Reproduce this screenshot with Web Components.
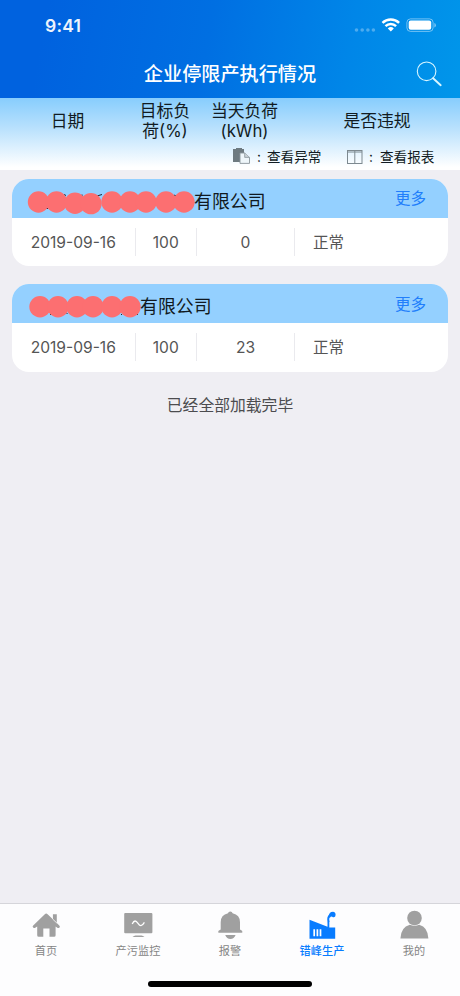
<!DOCTYPE html>
<html lang="zh-CN">
<head>
<meta charset="utf-8">
<title>企业停限产执行情况</title>
<style>
body{margin:0;background:#efeef3;font-family:Inter,"Noto Sans CJK SC",sans-serif}
</style>
</head>
<body>
<app-screen></app-screen>
<script>
const define = (name, html, after) => customElements.define(name, class extends HTMLElement {
  connectedCallback() {
    if (this.shadowRoot) return;
    const root = this.attachShadow({mode: 'open'});
    root.innerHTML = '<style>*{box-sizing:border-box}svg{display:block;overflow:visible}</style>' + html;
    if (after) after(this, root);
  }
});

define('status-bar', `
<style>
:host{display:flex;height:50px;padding:0 24px 0 45px;justify-content:space-between;align-items:flex-start;color:#fff}
.time{font-size:17.5px;line-height:20px;font-weight:600;margin-top:16px;letter-spacing:.2px;opacity:.93}
svg{margin-top:16px}
</style>
<span class="time">9:41</span>
<svg width="82" height="20" viewBox="354 16 82 20">
  <g fill="#fff" opacity=".3"><circle cx="356.5" cy="30" r="1.8"/><circle cx="362.2" cy="30" r="1.8"/><circle cx="367.9" cy="30" r="1.8"/><circle cx="373.4" cy="30" r="1.8"/></g>
  <g fill="none" stroke="#fff" stroke-width="2.5"><path d="M382.5 22.9a12 12 0 0 1 16.6 0"/><path d="M385.5 26.1a7.6 7.6 0 0 1 10.6 0"/></g>
  <path d="M387.8 28.4a4.3 4.3 0 0 1 6 0L390.8 31.6z" fill="#fff"/>
  <rect x="406.9" y="18.9" width="26.2" height="12.5" rx="3.6" fill="none" stroke="#fff" stroke-opacity=".45"/>
  <rect x="408.7" y="20.6" width="22.5" height="9.2" rx="2" fill="#fff"/>
  <path d="M434.4 23q1.5.5 1.5 2.2t-1.5 2.2z" fill="#fff" opacity=".5"/>
</svg>`);

define('nav-bar', `
<style>
:host{display:grid;grid-template-columns:60px 1fr 60px;height:48px;align-items:center;color:#fff}
h1{grid-column:2;margin:0;text-align:center;font-size:19.15px;line-height:26px;font-weight:500;white-space:nowrap}
svg{margin-left:16px}
</style>
<h1><slot></slot></h1>
<svg width="26" height="26" viewBox="416 61 26 26" fill="none" stroke="#d9f6ff"><circle cx="426.6" cy="71.3" r="9.3" stroke-width="1.1"/><path d="M433.1 78.2l7.6 7" stroke-width="1.9" stroke-linecap="round"/></svg>`);

define('column-head', `
<style>
:host{display:block;height:72px;background:linear-gradient(#87cdfd,#b9e1fd 42%,#fff 96%);color:#111b22}
.cols{display:grid;grid-template-columns:135px 60px 99px 166px;height:46px;padding-top:1px;align-items:center;text-align:center;font-size:16.8px;line-height:19.6px}
.legend{display:flex;height:25px;align-items:center;padding-left:233px;font-size:13.6px;line-height:20px}
.legend span{width:68px;white-space:nowrap}
.legend i{width:16px;font-style:normal;text-align:center}
.legend .wide{width:80px}
.legend i+span:last-child{margin-left:1px}
</style>
<div class="cols"><span>日期</span><span>目标负<br>荷(%)</span><span>当天负荷<br>(kWh)</span><span>是否违规</span></div>
<div class="legend">
  <svg width="18" height="17" viewBox="0 0 18 17"><path d="M0 1h3V0h6v1h2v4H7v9H0z" fill="#6e7a80"/><path d="M7 5h4.7l4.8 4.4v6H7z" fill="#eef6fa" stroke="#89949a" stroke-width=".9"/><path d="M11.7 5v4.4h4.8" fill="#cbd3d7" stroke="#89949a" stroke-width=".8"/></svg>
  <i>:</i><span class="wide">查看异常</span>
  <svg width="16" height="14" viewBox="0 0 16 14" fill="none" stroke="#7d8990"><rect x=".5" y=".5" width="14.5" height="13"/><path d="M.5 2h14.5M7.8 1v12.5"/></svg>
  <i>:</i><span>查看报表</span>
</div>`);

define('record-card', `
<style>
:host{display:block;height:87.6px;border-radius:17px;background:#fff;overflow:hidden;font-size:15.6px;color:#555}
header{display:flex;justify-content:space-between;height:39px;background:#94d0ff;padding:0 22px 0 16px}
.name{display:flex;color:#101820;font-size:17.9px;line-height:28px;padding-top:9px}
.more{color:#217efb;font-size:15.5px;line-height:24px;padding-top:8.6px}
.row{display:grid;grid-template-columns:123.5px 61.5px 98px 1fr;align-items:center;padding-top:10px}
.row span{height:28px;line-height:30px;text-align:center;border-right:1px solid #eaeaee}
.row span:last-child{border:0;text-align:left;padding-left:18px;font-size:15.5px}
</style>
<header><div class="name"><svg height="27"></svg><slot></slot></div><div class="more">更多</div></header>
<div class="row"><span class="date"></span><span class="target"></span><span class="load"></span><span>正常</span></div>`,
(el, root) => {
  root.querySelector('.date').textContent = el.getAttribute('date');
  root.querySelector('.target').textContent = el.getAttribute('target');
  root.querySelector('.load').textContent = el.getAttribute('load');
  const svg = root.querySelector('.name svg');
  svg.setAttribute('width', el.getAttribute('mask-width'));
  svg.innerHTML = `<path d="${el.getAttribute('specks')}" stroke="#182630" fill="none"/>` +
    el.getAttribute('mask').split(' ').map(p => {
      const [x, y] = p.split(',');
      return `<circle cx="${x}" cy="${y}" r="10.7" fill="#fc6f71"/>`;
    }).join('');
});

const icons = {
  home: '<path fill="#a0a0a0" d="M1.2 15.6Q0 14.5 1.2 13.4L12.8 2.2Q14.2 1 15.6 2.2L20.6 7V2.2H24.8V11L27.3 13.4Q28.6 14.6 27.3 15.8Q26.2 16.5 25 15.6L23.6 14.4V23.3Q23.6 24.8 22.1 24.8H17.5V16.6H11.3V24.8H6.7Q5.2 24.8 5.2 23.3V14.4L3.6 15.6Q2.3 16.6 1.2 15.6z"/><path d="M20.5 1.5v5.4l4.4 4.2" fill="none" stroke="#fcfcfe" stroke-width=".8"/>',
  monitor: '<rect x=".2" y="1" width="28.2" height="20.2" rx="1" fill="#a0a0a0"/><path d="M8.2 12C10.2 7.8 12 8.4 14 11.4S17.8 14.8 20.4 10.4" fill="none" stroke="#fff" stroke-width="1.3"/><path d="M8.5 25q1.5-1.5 3-1.5h6q1.5 0 3 1.5z" fill="#a0a0a0"/>',
  bell: '<path fill="#a0a0a0" d="M4.7 17.6V10.2Q4.7 2.8 12 1.2Q12.4-.4 14.3-.4T16.6 1.2Q24 2.8 24 10.2V17.6L26 18.7Q27.2 20.7 25.7 20.7H2.9Q1.4 20.7 2.6 18.7zM9.2 23.1H19.6Q18 27.1 14.4 27.1T9.2 23.1z"/>',
  factory: '<path fill="#087cff" d="M1.5 7.7L19.5 14.8V9.5H21.3V15.5H27.2V26.7H1.5z"/><path d="M20.7 10Q19.3 5.7 22 3" fill="none" stroke="#087cff" stroke-width="2"/><path fill="#087cff" d="M20.8 4.8Q20.8-.3 25.2-.2Q28.4.5 27.3 4.2Q26.1 6 24.2 4.7Q22.8 4.2 21.8 6z"/><path d="M6.2 17.3v7M9.4 17.3v7M12.5 17.3v7" stroke="#fff" stroke-width="1.7"/>',
  user: '<circle cx="14.5" cy="6" r="7.3" fill="#a0a0a0"/><path fill="#a0a0a0" d="M.4 26.6Q.8 15 9.8 12.7Q14.5 14.8 19.2 12.7Q28 15 28.4 26.6z"/>'
};
define('tab-item', `
<style>
:host{display:flex;flex-direction:column;align-items:center;padding-top:7.5px;color:#858585;font-size:11.2px;line-height:16px}
:host([active]){color:#087cff;font-weight:500}
span{margin-top:4px}
</style>
<svg width="29" height="27" viewBox="0 0 29 27"></svg><span><slot></slot></span>`,
(el, root) => { root.querySelector('svg').innerHTML = icons[el.getAttribute('icon')]; });

define('tab-bar', `
<style>
:host{display:flex;flex-direction:column;align-items:center;height:93px;background:#fdfdfe;border-top:1px solid #d5d5da}
nav{display:grid;grid-template-columns:repeat(5,1fr);width:460px;height:77px}
i{width:164px;height:5.6px;border-radius:3px;background:#000}
</style><nav><slot></slot></nav><i></i>`);

define('app-screen', `
<style>
:host{display:flex;flex-direction:column;width:460px;height:996px;background:#efeef3;overflow:hidden}
.top{height:98px;background:linear-gradient(100deg,#0062df 10%,#006fe2 45%,#0086e8 75%,#0096ea);flex:none}
column-head{flex:none}
main{flex:1;display:flex;flex-direction:column;gap:18px;padding:8.8px 12px 0}
p{margin:4.5px 0 0;text-align:center;font-size:15.8px;line-height:24px;color:#4c4c4f}
</style>
<div class="top"><status-bar></status-bar><nav-bar>企业停限产执行情况</nav-bar></div>
<column-head></column-head>
<main>
<record-card date="2019-09-16" target="100" load="0" mask-width="166" mask="10.5,14 28.5,14 47,15.2 63,15.6 84,14 102,14 118,14 138,14 156,14" specks="M18 20.5h2M36 6.5l2 1M54 6.5v2M69 8l5-1.5M146 7l2 1">有限公司</record-card>
<record-card date="2019-09-16" target="100" load="23" mask-width="112" mask="12,13.7 30,13.7 49,13.7 65,13.7 84,13.7 102,13.7" specks="M5 21.5h1M22 21.5h1M39 20v1M72 6.5v1M93 21.5h1M109 21.5h1">有限公司</record-card>
<p>已经全部加载完毕</p>
</main>
<tab-bar>
<tab-item icon="home">首页</tab-item><tab-item icon="monitor">产污监控</tab-item><tab-item icon="bell">报警</tab-item><tab-item icon="factory" active>错峰生产</tab-item><tab-item icon="user">我的</tab-item>
</tab-bar>`);
</script>
</body>
</html>
